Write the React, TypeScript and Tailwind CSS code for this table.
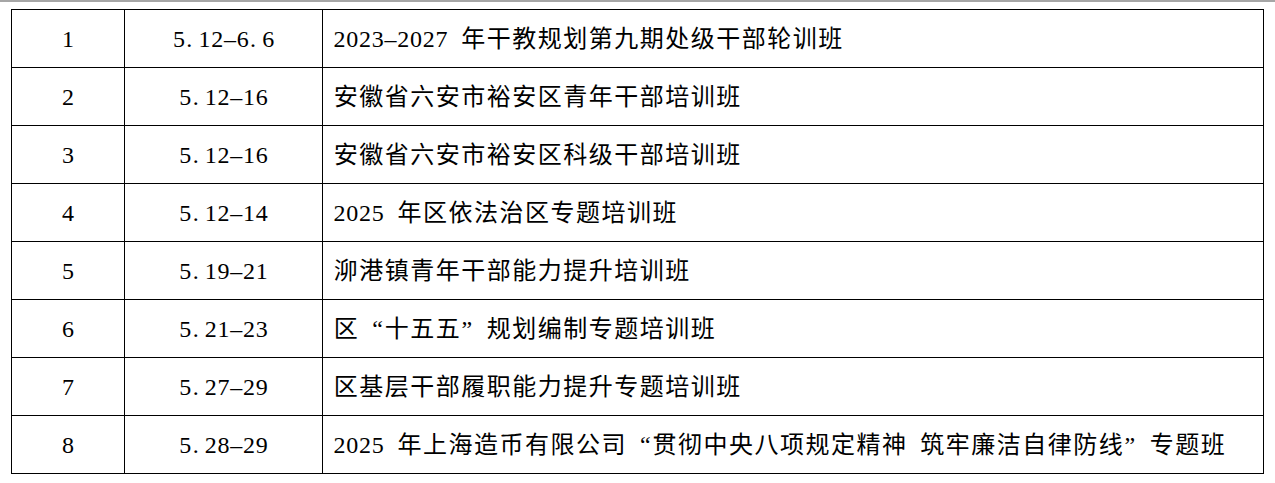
const rows: [string, string, string][] = [
  ["1", "5.12-6.6", "2023-2027 年干教规划第九期处级干部轮训班"],
  ["2", "5.12-16", "安徽省六安市裕安区青年干部培训班"],
  ["3", "5.12-16", "安徽省六安市裕安区科级干部培训班"],
  ["4", "5.12-14", "2025 年区依法治区专题培训班"],
  ["5", "5.19-21", "泖港镇青年干部能力提升培训班"],
  ["6", "5.21-23", "区“十五五”规划编制专题培训班"],
  ["7", "5.27-29", "区基层干部履职能力提升专题培训班"],
  ["8", "5.28-29", "2025 年上海造币有限公司“贯彻中央八项规定精神 筑牢廉洁自律防线”专题班"],
];

// Song-style fixed grid: ascii half cell, everything else full cell
function Grid({ text }: { text: string }) {
  return (
    <span className="whitespace-nowrap">
      {Array.from(text).map((ch, i) => {
        if (ch === ".")
          return (
            <span key={i} className="inline-block w-[12.75px] text-left pl-[1px]">
              .
            </span>
          );
        if (ch === "-")
          return (
            <span key={i} className="inline-block w-[12.75px] text-center">
              –
            </span>
          );
        if (ch === "“")
          return (
            <span key={i} className="inline-block w-[25.5px] text-right pr-[1px]">
              {ch}
            </span>
          );
        if (ch === "”")
          return (
            <span key={i} className="inline-block w-[25.5px] text-left pl-[1px]">
              {ch}
            </span>
          );
        return ch.charCodeAt(0) < 128 ? (
          <span key={i} className="inline-block w-[12.75px] text-center">
            {ch === " " ? "\u00a0" : ch}
          </span>
        ) : (
          <span key={i} className="inline-block w-[25.5px] text-center">
            {ch}
          </span>
        );
      })}
    </span>
  );
}

export default function App() {
  return (
    <div className="w-[1275px] h-[483px] bg-white overflow-hidden text-black text-[24px] leading-none font-['Liberation_Serif','Noto_Sans_CJK_SC',serif]">
      <div className="h-[2px] bg-[#a6a6a6]" />
      <div className="mt-[7px] ml-[11px] w-[1253px] border-l border-t border-black grid grid-cols-[113px_198px_941px]">
        {rows.map(([n, d, t]) => (
          <div key={n} className="contents">
            <div className="h-[58px] border-r border-b border-black flex items-center justify-center">
              <Grid text={n} />
            </div>
            <div className="h-[58px] border-r border-b border-black flex items-center justify-center">
              <Grid text={d} />
            </div>
            <div className="h-[58px] border-r border-b border-black flex items-center pl-[10px]">
              <Grid text={t} />
            </div>
          </div>
        ))}
      </div>
    </div>
  );
}
